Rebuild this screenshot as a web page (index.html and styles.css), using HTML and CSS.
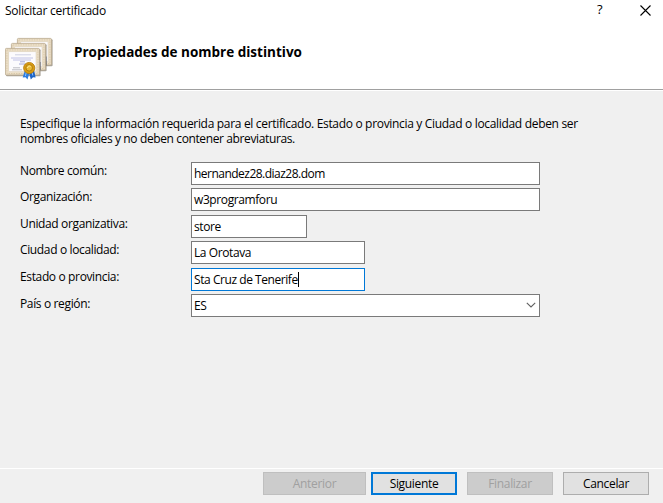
FILE: index.html
```html
<!DOCTYPE html>
<html lang="es">
<head>
<meta charset="utf-8">
<title>Solicitar certificado</title>
<link rel="stylesheet" href="styles.css">
</head>
<body>
<div class="dialog">
  <header class="header">
    <div class="titlebar">
      <span class="caption">Solicitar certificado</span>
      <span class="help">?</span>
      <svg class="close" width="11" height="11" viewBox="0 0 11 11"><path d="M.5.5l10 10M10.5.5l-10 10" stroke="#000" stroke-width="1.1" fill="none"/></svg>
    </div>
    <div class="banner">
      <svg class="cert" width="50" height="44" viewBox="0 0 50 44">
        <defs>
          <g id="sheet">
            <rect x="1" y="1.2" width="34.6" height="27" rx="1" fill="#8d8578" opacity=".75"/>
            <rect x=".4" y=".4" width="34" height="26.6" rx="1" fill="#ece0ca" stroke="#b9a88c" stroke-width=".8"/>
            <rect x="1.9" y="1.9" width="31" height="23.6" fill="none" stroke="#d8c6a6" stroke-width=".9" stroke-dasharray="1.5 1"/>
            <rect x="3.8" y="3.8" width="27.2" height="19.8" fill="#fcfbfd" stroke="#d9ceb9" stroke-width=".5"/>
          </g>
        </defs>
        <use href="#sheet" x="12" y="1"/>
        <path d="M41 19.5v9" stroke="#34466c" stroke-width="1"/>
        <use href="#sheet" x="6" y="6"/>
        <path d="M35 25v8" stroke="#34466c" stroke-width="1"/>
        <use href="#sheet" x="0" y="11"/>
        <path d="M10 17.8h16" stroke="#c3c5da" stroke-width=".8"/>
        <path d="M6 21h22M8 23h18" stroke="#b1b5e0" stroke-width=".8"/>
        <path d="M15 24.8h5M14 27h7" stroke="#8d94d0" stroke-width=".8"/>
        <path d="M8 30.8h7M7 32.8h10" stroke="#b5b5bd" stroke-width=".9"/>
        <path d="M20 33l-2.3 7.6 2.8-.3 2 2.2 2.2-7.8z" fill="#2c7de0"/>
        <path d="M29 33l1.6 7.5-2.6-.3-2.2 2.3-2-7.8z" fill="#1d64c6"/>
        <path d="M21.4 35l-1 4M27 35l.8 3.5" stroke="#8ec2ff" stroke-width="1"/>
        <circle cx="24.2" cy="31" r="5.6" fill="#d99c12" stroke="#b47a08" stroke-width=".8"/>
        <circle cx="24.2" cy="30.8" r="3.3" fill="#e9b936" stroke="#a87409" stroke-width=".8"/>
        <path d="M22.6 31a1.8 1.8 0 0 1 3-1.4" stroke="#fff0a8" stroke-width=".9" fill="none"/>
      </svg>
      <h1 class="heading">Propiedades de nombre distintivo</h1>
    </div>
  </header>
  <main class="content">
    <p class="intro"><span class="line line-a">Especifique la información requerida para el certificado. Estado o provincia y Ciudad o localidad deben ser</span> <span class="line line-b">nombres oficiales y no deben contener abreviaturas.</span></p>
    <div class="form">
      <div class="row"><span class="label">Nombre común:</span><div class="field tight">hernandez28.diaz28.dom</div></div>
      <div class="row"><span class="label">Organización:</span><div class="field">w3programforu</div></div>
      <div class="row"><span class="label">Unidad organizativa:</span><div class="field short">store</div></div>
      <div class="row"><span class="label">Ciudad o localidad:</span><div class="field medium">La Orotava</div></div>
      <div class="row"><span class="label">Estado o provincia:</span><div class="field medium focused">Sta Cruz de Tenerife<i class="caret"></i></div></div>
      <div class="row"><span class="label country">País o región:</span><div class="field select">ES
        <svg width="10" height="6" viewBox="0 0 10 6"><path d="M.8.8L5 4.9 9.2.8" stroke="#606060" stroke-width="1.1" fill="none"/></svg></div></div>
    </div>
  </main>
  <footer class="footer">
    <div class="button wide disabled">Anterior</div>
    <div class="button primary">Siguiente</div>
    <div class="button disabled">Finalizar</div>
    <div class="button">Cancelar</div>
  </footer>
</div>
</body>
</html>
```
FILE: styles.css
```css
* { box-sizing: border-box; }
body {
  margin: 0;
  font: 12px/15px "Open Sans", "Noto Sans", sans-serif;
  color: #000;
  background: #f0f0f0;
  white-space: nowrap;
}
.dialog { width: 663px; height: 503px; display: flex; flex-direction: column; background: #f0f0f0; }
.header { height: 91px; background: #fff; border-bottom: 1px solid #fff; box-shadow: inset 0 -1px #a0a0a0; }
.titlebar { display: flex; height: 21px; padding-left: 5px; }
.caption { width: 592px; padding-top: 3px; letter-spacing: -.26px; }
.help { width: 43px; padding-top: 2px; font-size: 13px; }
.close { margin-top: 5px; }
.banner { display: flex; padding-left: 5px; }
.cert { margin-top: 16px; }
.heading { margin: 22px 0 0 19px; font-size: 13.5px; line-height: 18px; letter-spacing: 0; }
.content { height: 377px; padding: 25px 20px 0; }
.intro { margin: 0; height: 46px; }
.line { display: block; height: 15px; }
.line-a { letter-spacing: -.32px; }
.line-b { letter-spacing: -.38px; }
.form { display: flex; flex-direction: column; }
.row { display: flex; height: 26px; }
.row:nth-child(2), .row:nth-child(4) { height: 27px; }
.label { width: 171px; padding-top: 1px; letter-spacing: -.36px; }
.country { padding-top: 2px; }
.field {
  width: 349px;
  height: 23px;
  display: flex;
  align-items: center;
  padding: 0 3px 1px 2px;
  background: #fff;
  border: 1px solid #7a7a7a;
  letter-spacing: -.4px;
}
.tight { letter-spacing: -.52px; }
.short { width: 116px; }
.medium { width: 174px; }
.focused { border-color: #0078d7; letter-spacing: -.44px; }
.caret { width: 1px; height: 15px; background: #000; }
.select { justify-content: space-between; }
.footer {
  height: 35px;
  display: flex;
  border-top: 1px solid #fff;
  padding: 3px 14px 0 263px;
}
.button {
  width: 86px;
  height: 23px;
  margin-right: 10px;
  display: flex;
  align-items: center;
  justify-content: center;
  flex: none;
  background: #e1e1e1;
  border: 1px solid #adadad;
  letter-spacing: -.32px;
}
.wide { width: 103px; margin-right: 5px; }
.primary { border: 2px solid #0078d7; }
.disabled { color: #a0a0a0; background: #ccc; border-color: #bfbfbf; }
```
